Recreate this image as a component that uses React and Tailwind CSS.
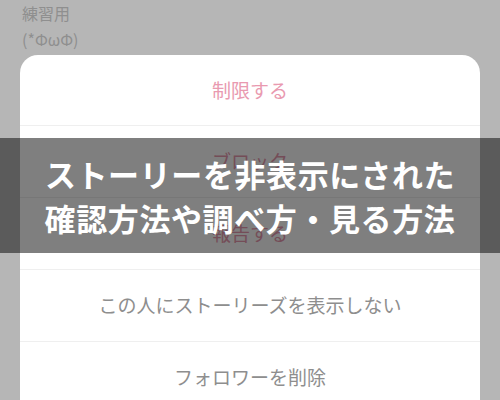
const rows = [
  { label: '制限する', tone: 'pink', h: 'h-[71px]' },
  { label: 'ブロック', tone: 'pink', h: 'h-[72px]' },
  { label: '報告する', tone: 'pink', h: 'h-[72px]' },
  { label: 'この人にストーリーズを表示しない', tone: 'gray', h: 'h-[72px]' },
  { label: 'フォロワーを削除', tone: 'gray', h: 'h-[72px]' },
];

export default function App() {
  return (
    <div
      className="relative h-[400px] w-[500px] overflow-hidden bg-[#b6b6b6]"
      style={{ fontFamily: '"Noto Sans CJK JP", "Noto Sans", sans-serif' }}
    >
      <div className="h-[55px] px-[22px] text-[16px] leading-[26px] text-[#8f8f8f]">
        <div>練習用</div>
        <div>(*ΦωΦ)</div>
      </div>

      <div className="mx-[20px] overflow-hidden rounded-t-[18px] bg-white">
        {rows.map((r) => (
          <div
            key={r.label}
            className={`flex ${r.h} items-center justify-center border-b border-[#efefef] text-[19px] ${
              r.tone === 'pink' ? 'text-[#e99ab0]' : 'text-[#8e8e8e]'
            }`}
          >
            {r.label}
          </div>
        ))}
      </div>

      <div className="absolute left-0 right-0 top-[138px] flex h-[115px] flex-col items-center justify-center bg-black/50 text-[31px] font-bold leading-[44px] text-white">
        <div className="tracking-[0.6px]">ストーリーを非表示にされた</div>
        <div className="tracking-[0.6px]">確認方法や調べ方・見る方法</div>
      </div>
    </div>
  );
}
